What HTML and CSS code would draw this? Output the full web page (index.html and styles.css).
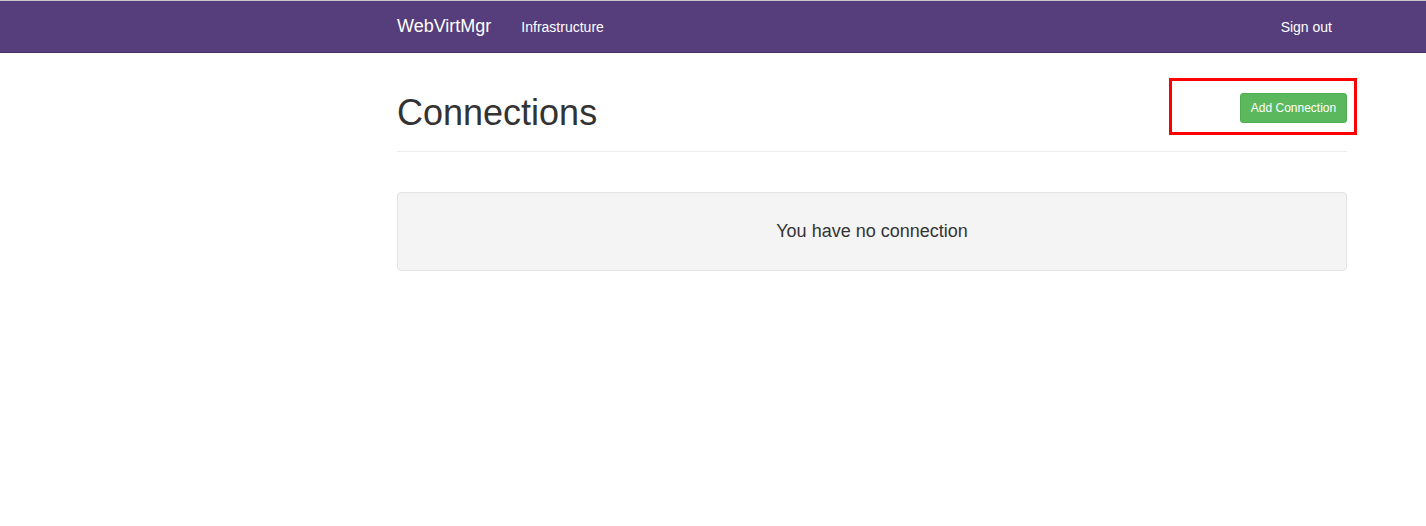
FILE: index.html
```html
<!DOCTYPE html>
<html>
<head>
<meta charset="utf-8">
<title>WebVirtMgr</title>
<link rel="stylesheet" href="styles.css">
</head>
<body>
<div class="topline"></div>
<nav class="navbar">
  <div class="container nav-inner">
    <div class="nav-left">
      <a class="brand">WebVirtMgr</a>
      <a class="nav-link">Infrastructure</a>
    </div>
    <a class="nav-link signout">Sign out</a>
  </div>
</nav>
<main class="container">
  <div class="page-header">
    <h1 class="title">Connections</h1>
    <div class="action">
      <button class="btn-add">Add Connection</button>
      <div class="highlight"></div>
    </div>
  </div>
  <div class="well">
    <h4 class="empty">You have no connection</h4>
  </div>
</main>
</body>
</html>
```

FILE: styles.css
```css
* { box-sizing: border-box; }
html, body {
  margin: 0;
  padding: 0;
  background: #fff;
  font-family: "Liberation Sans", Arial, sans-serif;
  font-size: 14px;
  color: #333;
}
.topline {
  height: 1px;
  background: #c8c8c8;
}
.navbar {
  background: #563d7c;
  border-bottom: 1px solid #463265;
  height: 52px;
}
.container {
  margin-left: 397px;
  width: 950px;
}
.nav-inner {
  display: flex;
  justify-content: space-between;
  align-items: center;
  height: 51px;
}
.nav-left {
  display: flex;
  align-items: center;
}
.brand {
  font-size: 18px;
  color: #fff;
  margin-right: 30px;
}
.nav-link {
  font-size: 14px;
  color: #fff;
}
.signout {
  margin-right: 15px;
}
.page-header {
  display: flex;
  justify-content: space-between;
  align-items: flex-start;
  border-bottom: 1px solid #eee;
  padding-top: 40px;
  height: 99px;
}
.title {
  margin: 0;
  font-size: 36px;
  font-weight: 500;
  line-height: 40px;
  color: #333;
}
.action {
  position: relative;
}
.btn-add {
  display: block;
  height: 30px;
  width: 107px;
  padding: 0;
  font-family: "Liberation Sans", Arial, sans-serif;
  font-size: 12px;
  color: #fff;
  background: #5cb85c;
  border: 1px solid #4cae4c;
  border-radius: 3px;
}
.highlight {
  position: absolute;
  left: -71px;
  top: -15px;
  width: 188px;
  height: 57px;
  border: 3px solid #f00;
}
.well {
  margin-top: 40px;
  background: #f4f4f4;
  border: 1px solid #e3e3e3;
  border-radius: 4px;
  height: 79px;
  display: flex;
  align-items: center;
  justify-content: center;
}
.empty {
  margin: 0;
  font-size: 18px;
  font-weight: 500;
  color: #333;
}
```
